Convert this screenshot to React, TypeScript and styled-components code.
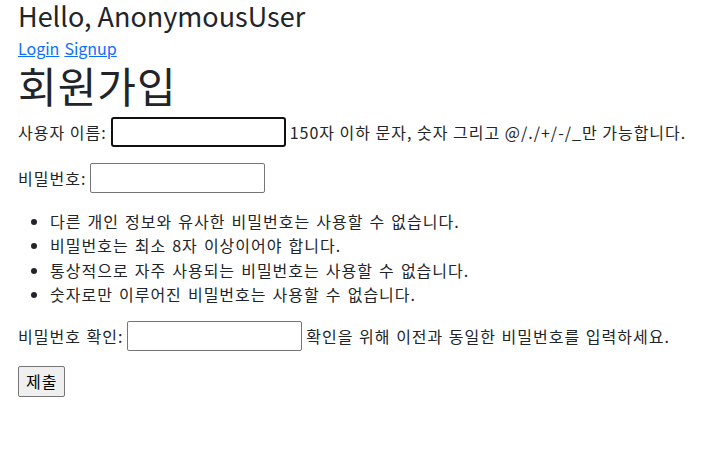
import React from 'react';
import styled, { createGlobalStyle } from 'styled-components';

const GlobalStyle = createGlobalStyle`
  body {
    margin: 0;
    background: #fff;
    color: #212529;
    font-family: "Noto Sans CJK KR", "Noto Sans", sans-serif;
    font-size: 16px;
    letter-spacing: 1px;
    line-height: 1.5;
  }
`

const Page = styled.div`
  padding: 0 18px;
`

const Greeting = styled.h3`
  margin: 0;
  font-size: 27px;
  font-weight: 400;
  letter-spacing: 0;
  line-height: 1.2;
`

const Nav = styled.div`
  display: flex;
  gap: 5px;
  margin-top: 4px;
  letter-spacing: 0;

  > a {
    color: #0d6efd;
    text-decoration: underline;
  }
`

const Title = styled.h1`
  margin: 0 0 6px;
  font-size: 42px;
  font-weight: 400;
  letter-spacing: 1px;
  line-height: 1.2;
`

const Row = styled.p<{ $wide?: boolean }>`
  display: flex;
  align-items: center;
  gap: 4px;
  margin: 0 0 16px;
  white-space: nowrap;
  word-spacing: ${p => p.$wide ? '1px' : '0'};
`

const Field = styled.input<{ $focused?: boolean }>`
  box-sizing: border-box;
  width: 175px;
  height: 30px;
  margin: 0;
  padding: 1px 2px;
  border: ${p => p.$focused ? '2px solid #101010' : '1px solid #767676'};
  border-radius: ${p => p.$focused ? '3px' : '2px'};
  background: #fff;
  font-size: 15px;
  outline: none;
`

const Rules = styled.ul`
  margin: 0 0 14px;
  padding-left: 32px;

  > li {
    line-height: 24.5px;
    word-spacing: 1.5px;
  }
`

const Submit = styled.button`
  box-sizing: border-box;
  height: 31px;
  margin-top: -1px;
  padding: 0 7px;
  border: 1px solid #767676;
  border-radius: 2px;
  background: #efefef;
  color: #000;
  font-family: inherit;
  font-size: 16px;
  letter-spacing: 1px;
`

const rules = [
  '다른 개인 정보와 유사한 비밀번호는 사용할 수 없습니다.',
  '비밀번호는 최소 8자 이상이어야 합니다.',
  '통상적으로 자주 사용되는 비밀번호는 사용할 수 없습니다.',
  '숫자로만 이루어진 비밀번호는 사용할 수 없습니다.',
]

export default function App() {
  return (
    <Page>
      <GlobalStyle />
      <Greeting>Hello, AnonymousUser</Greeting>
      <Nav>
        <a href="#login">Login</a>
        <a href="#signup">Signup</a>
      </Nav>
      <Title>회원가입</Title>
      <form onSubmit={e => e.preventDefault()}>
        <Row>
          <label htmlFor="id_username">사용자 이름:</label>
          <Field id="id_username" type="text" $focused />
          <span>150자 이하 문자, 숫자 그리고 @/./+/-/_만 가능합니다.</span>
        </Row>
        <Row>
          <label htmlFor="id_password1">비밀번호:</label>
          <Field id="id_password1" type="password" />
        </Row>
        <Rules>
          {rules.map(r => <li key={r}>{r}</li>)}
        </Rules>
        <Row $wide>
          <label htmlFor="id_password2">비밀번호 확인:</label>
          <Field id="id_password2" type="password" />
          <span>확인을 위해 이전과 동일한 비밀번호를 입력하세요.</span>
        </Row>
        <Submit type="submit">제출</Submit>
      </form>
    </Page>
  );
}
